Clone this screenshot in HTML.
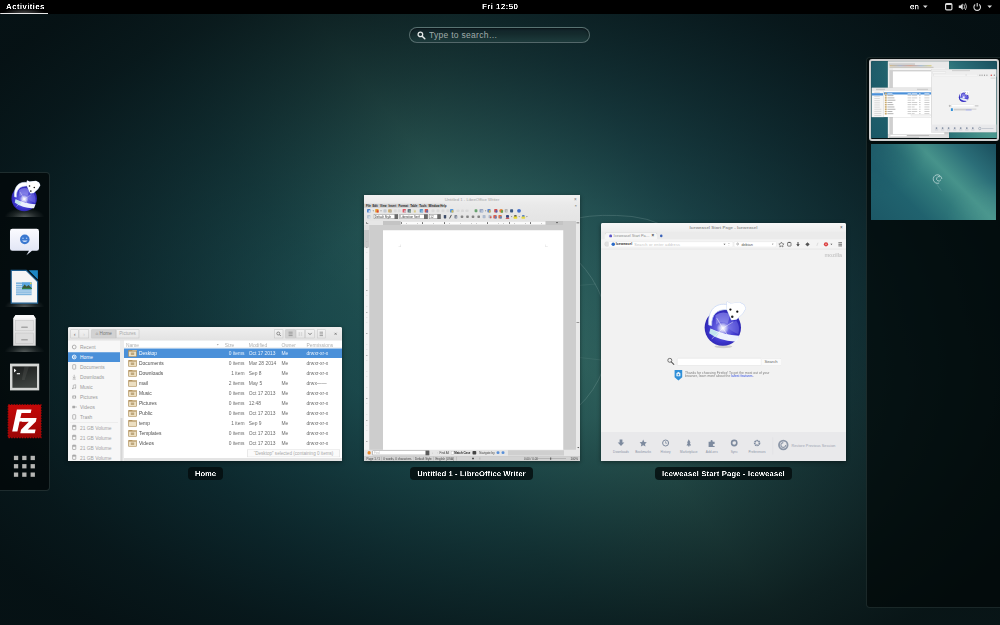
<!DOCTYPE html>
<html>
<head>
<meta charset="utf-8">
<title>Activities</title>
<style>
*{box-sizing:border-box;margin:0;padding:0}
html,body{width:1000px;height:625px;overflow:hidden;background:#0a1719;font-family:"Liberation Sans",sans-serif;}
#root{position:absolute;left:0;top:0;width:1000px;height:625px;overflow:hidden;background:#1c4545;}
.abs{position:absolute}
#wall{position:absolute;left:0;top:0;width:1000px;height:625px;
  background:
   radial-gradient(ellipse 45% 70% at 0% 0%, rgba(26,84,100,.75), rgba(26,84,100,0) 100%),
   radial-gradient(ellipse 40% 50% at 100% 100%, rgba(80,156,146,.55), rgba(80,156,146,0) 100%),
   linear-gradient(52deg, #1c5866 0%, #1f6470 22%, #2f7a7c 40%, #4a9890 53%, #2f747c 68%, #215f6c 82%, #174654 100%);}
#vig{position:absolute;left:0;top:0;width:1000px;height:625px;
  background:radial-gradient(ellipse 640px 400px at 500px 312px, rgba(4,12,14,.36) 0%, rgba(4,12,14,.44) 30%, rgba(4,12,14,.69) 62%, rgba(4,12,14,.86) 85%, rgba(4,12,14,.93) 100%);}
/* top bar */
#topbar{position:absolute;left:0;top:0;width:1000px;height:14px;background:#000;color:#fff;font-size:8px;font-weight:bold;}
#topbar .t{position:absolute;top:2px;line-height:36px;font-size:32px;white-space:nowrap;transform:scale(.25);transform-origin:0 0;will-change:transform}
/* search */
#search{position:absolute;left:409px;top:26.6px;width:181px;height:16px;border-radius:8px;border:1px solid rgba(150,172,170,.5);
  background:linear-gradient(#11232a 0%,#142a2c 40%,#1d3b3c 100%);box-shadow:inset 0 1px 2px rgba(0,0,0,.5);}
#search span{position:absolute;left:19px;top:2.6px;font-size:34px;line-height:36px;color:#a0acab;white-space:nowrap;letter-spacing:1.12px;transform:scale(.25);transform-origin:0 0}
/* dash */
#dash{position:absolute;left:-2px;top:172px;width:51.6px;height:319px;background:rgba(2,8,9,.78);border:1px solid rgba(70,92,92,.42);border-radius:0 4px 4px 0;}
.glow{position:absolute;left:5px;width:38.600px;height:9px;background:radial-gradient(ellipse 20px 9px at 50% 100%, rgba(205,210,205,.40), rgba(205,210,205,.12) 60%, rgba(205,210,205,0) 100%);}
/* captions */
.cap{position:absolute;height:13px;border-radius:4px;background:rgba(4,12,14,.82);color:#fff;}
.cap span{position:absolute;left:0;top:0;width:400%;height:52px;transform:scale(.25);transform-origin:0 0;will-change:transform;font-weight:bold;font-size:30.4px;line-height:52px;text-align:center;white-space:nowrap;letter-spacing:.5px}
.t4{position:absolute;transform:scale(.25);transform-origin:0 0;white-space:nowrap}
/* windows */
.win{position:absolute;background:#f3f3f3;overflow:hidden;box-shadow:0 1px 4px rgba(0,0,0,.45);}
.win .x{position:absolute;white-space:nowrap}
.sc{position:absolute;left:0;top:0;width:400%;height:400%;transform:scale(.25);transform-origin:0 0}
</style>
</head>
<body>
<div id="root">
  <div id="wall"></div>
  <div id="vig"></div>
  <svg id="swirl" class="abs" style="left:560px;top:190px" width="120" height="300" viewBox="560 190 120 300" fill="none" stroke="#d4ebe6" stroke-width=".7" opacity=".22">
    <path d="M578 218Q600 213.500 632 216.500Q648 218.500 660 224"/>
    <path d="M578 261Q594 277 603 301"/>
    <path d="M578 285.500L596 284" opacity=".5"/>
    <path d="M578 357.300L603 360.200" opacity=".5"/>
    <path d="M603 369.500Q595 391 578 407"/>
  </svg>

  <!-- TOP BAR -->
  <div id="topbar">
    <div class="abs" style="left:0;top:6px;width:48px;height:8px;background:radial-gradient(ellipse 22px 6px at 50% 100%, rgba(255,255,255,.32), rgba(255,255,255,0) 100%)"></div>
    <div class="abs" style="left:0;top:12.5px;width:48px;height:1.5px;background:#e8e8e8;border-radius:2px 0 0 0"></div>
    <div class="t" style="left:6px;letter-spacing:1.28px">Activities</div>
    <div class="t" style="left:482.4px;letter-spacing:1.52px">Fri 12:50</div>
    <div class="t" style="left:910px;font-weight:normal;color:#e8e8e8;-webkit-text-stroke:1.1px #e8e8e8">en</div>
    <svg class="abs" style="left:920px;top:0" width="80" height="14" viewBox="0 0 80 14">
      <path d="M3 5.5h4.6L5.3 8z" fill="#ddd"/>
      <rect x="25.6" y="3.6" width="6.3" height="6.3" rx="1.2" fill="none" stroke="#ddd" stroke-width="1.2"/><rect x="25.6" y="3.4" width="6.3" height="1.6" rx=".6" fill="#ddd"/>
      <path d="M38.8 5.4h1.7l2.2-2v6.6l-2.2-2h-1.7z" fill="#ddd"/>
      <path d="M43.9 4.4q1.4 2.3 0 4.6M45.4 3.4q2.2 3.3 0 6.6" fill="none" stroke="#ccc" stroke-width=".9"/>
      <path d="M55.2 4.5a3.3 3.3 0 1 0 4 0" fill="none" stroke="#ddd" stroke-width="1.1"/>
      <path d="M57.2 3v3.6" stroke="#ddd" stroke-width="1.1"/>
      <path d="M67.4 5.5h4.6L69.7 8z" fill="#ddd"/>
    </svg>
  </div>

  <!-- SEARCH -->
  <div id="search">
    <svg class="abs" style="left:7px;top:3px" width="9" height="9" viewBox="0 0 9 9"><circle cx="3.4" cy="3.4" r="2.3" fill="none" stroke="#e6eaea" stroke-width="1.3"/><path d="M5.2 5.2L7.8 7.8" stroke="#e6eaea" stroke-width="1.5" stroke-linecap="round"/></svg>
    <span>Type to search…</span>
  </div>

  <!-- DASH -->
  <div id="dash"></div>
  <div class="glow" style="top:207.500px"></div>
  <div class="glow" style="top:297.800px"></div>
  <div class="glow" style="top:342.700px"></div>
  <svg class="abs" style="left:0;top:172px" width="50" height="320" viewBox="0 172 50 320">
    <defs>
      <radialGradient id="gl" cx=".5" cy=".52" r=".55">
        <stop offset="0" stop-color="#b9b8f6"/><stop offset=".28" stop-color="#6c69e2"/><stop offset=".7" stop-color="#3b34cc"/><stop offset="1" stop-color="#2a22a8"/>
      </radialGradient>
      <radialGradient id="st" cx=".5" cy=".5" r=".5"><stop offset="0" stop-color="#fff" stop-opacity=".95"/><stop offset="1" stop-color="#fff" stop-opacity="0"/></radialGradient>
      <linearGradient id="emp" x1="0" y1="0" x2="0" y2="1"><stop offset="0" stop-color="#fbfbff"/><stop offset="1" stop-color="#dde2f4"/></linearGradient>
      <linearGradient id="term" x1="0" y1="0" x2=".3" y2="1"><stop offset="0" stop-color="#1b1d1c"/><stop offset="1" stop-color="#3c413e"/></linearGradient>
      <linearGradient id="cab" x1="0" y1="0" x2="0" y2="1"><stop offset="0" stop-color="#f4f4f4"/><stop offset="1" stop-color="#d9d9d9"/></linearGradient>
      <linearGradient id="fz" x1="0" y1="0" x2="0" y2="1"><stop offset="0" stop-color="#c40808"/><stop offset="1" stop-color="#9c0606"/></linearGradient>
    </defs>
    <!-- iceweasel -->
    <g id="icew">
      <circle cx="24.2" cy="198.600" r="12.7" fill="url(#gl)"/>
      <path d="M19 190Q24 186.500 29.500 189.500L27.500 196Q23 193 19.500 196.500Z" fill="#a6a4f2" opacity=".5"/>
      <path d="M27 198L33.500 193.500Q36.500 198 35 203Q31 202 27 198Z" fill="#8c8aec" opacity=".4"/>
      <path d="M15.600 199.300Q25 203.800 35.600 204.300L34 208.200Q23.500 208.800 14.800 202.600Z" fill="#f2f8ff" opacity=".96"/>
      <path d="M15.400 199.200Q19 201 21.500 202.300L19.500 205.500Q16.500 204 14.700 202.600Z" fill="#8fd8dc" opacity=".45"/>
      <circle cx="24.200" cy="199" r="4.400" fill="url(#st)"/>
      <path d="M20 192L24.200 199L31.500 194.500M24.200 199L29 206M16.500 206.500L24.200 199" stroke="#fff" stroke-width=".5" opacity=".7" fill="none"/>
      <path d="M27.400 182.600C19.500 181 13.600 186 14.400 196.700L16.400 197.200C16.200 189.400 20 185.600 28 186Z" fill="#fff" stroke="#c6d6f6" stroke-width=".55"/>
      <path d="M27.400 181.200L29.600 182.300L36 181.600L38.600 183L39.600 185.200L37.600 188.600L33.400 192.400L30.600 192.800L29.200 189.600L27.600 186Z" fill="#fff" stroke="#c6d6f6" stroke-width="1.500" stroke-linejoin="round"/><path d="M27.400 181.200L29.600 182.300L36 181.600L38.600 183L39.600 185.200L37.600 188.600L33.400 192.400L30.600 192.800L29.200 189.600L27.600 186Z" fill="#fff" stroke="#fff" stroke-width=".9" stroke-linejoin="round"/>
      <circle cx="29.500" cy="186" r=".8" fill="#111"/><circle cx="34.300" cy="187.500" r=".8" fill="#111"/><circle cx="30.800" cy="191" r=".85" fill="#222"/>
    </g>
    <!-- empathy -->
    <path d="M12.4 228.8h24.2a2.4 2.4 0 0 1 2.4 2.4v17.2a2.4 2.4 0 0 1-2.4 2.4h-4.6l-5.6 4.4l2.6-4.4h-16.6a2.4 2.4 0 0 1-2.4-2.4v-17.2a2.4 2.4 0 0 1 2.4-2.4z" fill="url(#emp)"/>
    <circle cx="24.8" cy="239.4" r="4.8" fill="#3a78d0"/>
    <circle cx="23" cy="238.2" r=".8" fill="#a8c8f4"/><circle cx="26.6" cy="238.2" r=".8" fill="#a8c8f4"/>
    <path d="M22 240.4Q24.8 243.4 27.6 240.4Z" fill="#cfe0fa"/>
    <!-- libreoffice -->
    <path d="M11.2 270.4H26.2L37.6 281.6V303.2H11.2Z" fill="#f5f5f5" stroke="#1c5d8e" stroke-width="1.2"/>
    <path d="M28.6 270.2H37.9V279.4Z" fill="#1b86c4"/>
    <rect x="16" y="282.4" width="15.6" height="12.8" fill="#7db4dd"/>
    <path d="M16 284.5h6M16 286.7h6M16 288.9h6M16 291h15.6M16 293.2h15.6" stroke="#e9f2fa" stroke-width=".7"/>
    <rect x="22" y="282.4" width="9.8" height="6.6" fill="#5aa6e0"/>
    <path d="M22 288L24.6 284.6L26.6 286.6L28.6 285L31.8 288.2V289H22Z" fill="#3c5a3a"/>
    <rect x="22" y="288.2" width="9.8" height=".9" fill="#2d8a50"/>
    <circle cx="30.8" cy="283.4" r=".8" fill="#f4d83a"/>
    <!-- file cabinet -->
    <path d="M15.6 315H33.4L35.7 318.6V345.8H13.2V318.6Z" fill="url(#cab)"/>
    <path d="M15.6 315H33.4L35.7 318.6H13.2Z" fill="#fafafa"/>
    <rect x="15.6" y="320.6" width="17.8" height="10.2" fill="#e2e2e2" stroke="#c4c4c4" stroke-width=".6"/>
    <rect x="15.6" y="333" width="17.8" height="10.4" fill="#dcdcdc" stroke="#c2c2c2" stroke-width=".6"/>
    <rect x="21.2" y="326.6" width="6.6" height="1.5" rx=".5" fill="#a6a6a6"/>
    <rect x="21.2" y="339" width="6.6" height="1.5" rx=".5" fill="#a6a6a6"/>
    <!-- terminal -->
    <rect x="10" y="363.6" width="29.2" height="26.8" fill="#d4d6d4"/>
    <rect x="12.4" y="366.4" width="24.6" height="21.4" fill="url(#term)"/>
    <path d="M24.4 366.4H29L24.6 380H21.8Z" fill="#fff" opacity=".07"/>
    <path d="M14 368.4L16.4 370.6L14 372.6Z" fill="#f4f4f4"/>
    <rect x="16.8" y="373" width="3.2" height="1.3" fill="#d8d8d8"/>
    <!-- filezilla -->
    <rect x="8.3" y="404.9" width="32.6" height="32.6" fill="url(#fz)" stroke="#b20808" stroke-width="1.3" stroke-dasharray="1.5 1.17" />
    <rect x="8.9" y="405.5" width="31.4" height="31.4" fill="url(#fz)"/>
    <path d="M16.900 409.400H31.500L30.700 413.100H21.500L20.400 418.100H27.500L26.700 421.600H19.600L17.400 431.400H12.200Z" fill="#fff"/>
    <path d="M22.600 418.100H36.600L35.900 421.600L27.800 429.400H35.600L34.800 433.300H20.300L21 429.800L28.800 421.800H21.800Z" fill="#fff"/>
    <!-- apps grid -->
    <g fill="#b6b6b4">
      <rect x="13.9" y="455.8" width="4.3" height="4.3"/><rect x="22.2" y="455.8" width="4.3" height="4.3"/><rect x="30.6" y="455.8" width="4.3" height="4.3"/>
      <rect x="13.9" y="464.1" width="4.3" height="4.3"/><rect x="22.2" y="464.1" width="4.3" height="4.3"/><rect x="30.6" y="464.1" width="4.3" height="4.3"/>
      <rect x="13.9" y="472.5" width="4.3" height="4.3"/><rect x="22.2" y="472.5" width="4.3" height="4.3"/><rect x="30.6" y="472.5" width="4.3" height="4.3"/>
    </g>
  </svg>

<div class="win" id="wfiles" style="left:68px;top:327px;width:274px;height:134px;background:#fff;border-radius:2px 2px 0 0">
<div class="sc">
<div class="abs" style="left:0;top:0;width:1096px;height:54px;background:linear-gradient(#efefef,#e3e3e3);border-bottom:2.8px solid #c2c2c2"></div>
<div class="abs" style="left:10px;top:10.4px;width:33.2px;height:34.4px;background:linear-gradient(#f2f2f2,#e6e6e6);border:2.4px solid #c4c4c4;font-size:18.4px;line-height:30.4px;color:#888;text-align:center;white-space:nowrap"><span style="color:#666;font-size:24px;line-height:28px">‹</span></div>
<div class="abs" style="left:43.2px;top:10.4px;width:40.8px;height:34.4px;background:linear-gradient(#f2f2f2,#e6e6e6);border:2.4px solid #c4c4c4;font-size:18.4px;line-height:30.4px;color:#888;text-align:center;white-space:nowrap"><span style="color:#ccc;font-size:24px;line-height:28px">›</span></div>
<div class="abs" style="left:94px;top:10.4px;width:97.6px;height:34.4px;background:#d2d2d2;border:2.4px solid #c4c4c4;font-size:18.4px;line-height:30.4px;color:#888;text-align:center;white-space:nowrap"><span style="color:#777">⌂ Home</span></div>
<div class="abs" style="left:191.6px;top:10.4px;width:93.6px;height:34.4px;background:linear-gradient(#f2f2f2,#e6e6e6);border:2.4px solid #c4c4c4;font-size:18.4px;line-height:30.4px;color:#888;text-align:center;white-space:nowrap"><span style="color:#aaa">Pictures</span></div>
<div class="abs" style="left:824.8px;top:10.4px;width:36px;height:34.4px;background:linear-gradient(#f2f2f2,#e6e6e6);border:2.4px solid #c4c4c4;font-size:18.4px;line-height:30.4px;color:#888;text-align:center;white-space:nowrap"></div>
<div class="abs" style="left:870px;top:10.4px;width:40.8px;height:34.4px;background:#d2d2d2;border:2.4px solid #c4c4c4;font-size:18.4px;line-height:30.4px;color:#888;text-align:center;white-space:nowrap"></div>
<div class="abs" style="left:910.8px;top:10.4px;width:37.6px;height:34.4px;background:linear-gradient(#f2f2f2,#e6e6e6);border:2.4px solid #c4c4c4;font-size:18.4px;line-height:30.4px;color:#888;text-align:center;white-space:nowrap"></div>
<div class="abs" style="left:948.4px;top:10.4px;width:38.8px;height:34.4px;background:linear-gradient(#f2f2f2,#e6e6e6);border:2.4px solid #c4c4c4;font-size:18.4px;line-height:30.4px;color:#888;text-align:center;white-space:nowrap"></div>
<div class="abs" style="left:996px;top:10.4px;width:34.8px;height:34.4px;background:linear-gradient(#f2f2f2,#e6e6e6);border:2.4px solid #c4c4c4;font-size:18.4px;line-height:30.4px;color:#888;text-align:center;white-space:nowrap"></div>
<svg class="abs" style="left:800px;top:0" width="296" height="54" viewBox="200 0 74 13.5"><circle cx="210.3" cy="6.5" r="1.5" fill="none" stroke="#666" stroke-width=".7"/><path d="M211.4 7.6L212.8 9" stroke="#666" stroke-width=".8"/><path d="M220.6 5.2h4M220.6 6.9h4M220.6 8.6h4" stroke="#8a8a8a" stroke-width=".8"/><path d="M230.6 5.4h1.4v1.2h-1.4zM232.8 5.4h1.4v1.2h-1.4zM230.6 7.4h1.4v1.2h-1.4zM232.8 7.4h1.4v1.2h-1.4z" fill="#c4c4c4"/><path d="M240.3 5.9L242 7.7L243.7 5.9" fill="none" stroke="#666" stroke-width=".8"/><path d="M251.6 5.2h3.4M251.6 6.9h3.4M251.6 8.6h3.4" stroke="#8a8a8a" stroke-width=".8"/><path d="M266.6 5.8L268.6 7.8M268.6 5.8L266.6 7.8" stroke="#666" stroke-width=".7"/></svg>
<div class="abs" style="left:0;top:54px;width:208px;height:482px;background:#f7f7f7"></div>
<div class="abs" style="left:208px;top:54px;width:16px;height:482px;background:#ececec"></div>
<div class="abs" style="left:209.6px;top:364px;width:8.8px;height:172px;background:#d6d6d6"></div>
<div class="abs" style="left:0;top:101.2px;width:208px;height:39.2px;background:#4a90d9"></div>
<div class="abs" style="left:8px;top:381.6px;width:192px;height:2px;background:#e2e2e2"></div>
<div class="x" style="left:48px;top:70px;font-size:19.6px;line-height:24px;color:#9a9a9a">Recent</div>
<div class="x" style="left:48px;top:110px;font-size:19.6px;line-height:24px;color:#fff">Home</div>
<div class="x" style="left:48px;top:150px;font-size:19.6px;line-height:24px;color:#9a9a9a">Documents</div>
<div class="x" style="left:48px;top:190px;font-size:19.6px;line-height:24px;color:#9a9a9a">Downloads</div>
<div class="x" style="left:48px;top:230px;font-size:19.6px;line-height:24px;color:#9a9a9a">Music</div>
<div class="x" style="left:48px;top:270px;font-size:19.6px;line-height:24px;color:#9a9a9a">Pictures</div>
<div class="x" style="left:48px;top:310px;font-size:19.6px;line-height:24px;color:#9a9a9a">Videos</div>
<div class="x" style="left:48px;top:350px;font-size:19.6px;line-height:24px;color:#9a9a9a">Trash</div>
<div class="x" style="left:48px;top:392px;font-size:19.6px;line-height:24px;color:#a4a4a4">21 GB Volume</div>
<div class="x" style="left:48px;top:431.6px;font-size:19.6px;line-height:24px;color:#a4a4a4">21 GB Volume</div>
<div class="x" style="left:48px;top:471.2px;font-size:19.6px;line-height:24px;color:#a4a4a4">21 GB Volume</div>
<div class="x" style="left:48px;top:510.8px;font-size:19.6px;line-height:24px;color:#a4a4a4">21 GB Volume</div>
<div class="abs" style="left:224px;top:54px;width:872px;height:30.4px;background:#fff;border-bottom:2px solid #e4e4e4"></div>
<div class="x" style="left:232px;top:59.6px;font-size:19.6px;line-height:24px;color:#b0b0b0">Name</div>
<div class="x" style="left:627.2px;top:59.6px;font-size:19.6px;line-height:24px;color:#b0b0b0">Size</div>
<div class="x" style="left:723.2px;top:59.6px;font-size:19.6px;line-height:24px;color:#b0b0b0">Modified</div>
<div class="x" style="left:854px;top:59.6px;font-size:19.6px;line-height:24px;color:#b0b0b0">Owner</div>
<div class="x" style="left:954px;top:59.6px;font-size:19.6px;line-height:24px;color:#b0b0b0">Permissions</div>
<div class="abs" style="left:595.2px;top:68px;width:0;height:0;border:4.8px solid transparent;border-top:6.4px solid #aaa"></div>
<div class="abs" style="left:224px;top:85.6px;width:872px;height:38px;background:#4a90d9"></div>
<div class="x" style="left:284px;font-size:19.6px;line-height:24px;top:93.2px;color:#fff">Desktop</div>
<div class="x" style="left:600px;width:106px;text-align:right;font-size:19.6px;line-height:24px;top:93.2px;color:#eaf2fc">0 items</div>
<div class="x" style="left:723.2px;font-size:19.6px;line-height:24px;top:93.2px;color:#eaf2fc">Oct 17 2013</div>
<div class="x" style="left:854px;font-size:19.6px;line-height:24px;top:93.2px;color:#eaf2fc">Me</div>
<div class="x" style="left:954px;font-size:19.6px;line-height:24px;top:93.2px;color:#eaf2fc">drwxr-xr-x</div>
<div class="x" style="left:284px;font-size:19.6px;line-height:24px;top:133.2px;color:#4c4c4c">Documents</div>
<div class="x" style="left:600px;width:106px;text-align:right;font-size:19.6px;line-height:24px;top:133.2px;color:#6a6a6a">0 items</div>
<div class="x" style="left:723.2px;font-size:19.6px;line-height:24px;top:133.2px;color:#6a6a6a">Mar 28 2014</div>
<div class="x" style="left:854px;font-size:19.6px;line-height:24px;top:133.2px;color:#6a6a6a">Me</div>
<div class="x" style="left:954px;font-size:19.6px;line-height:24px;top:133.2px;color:#6a6a6a">drwxr-xr-x</div>
<div class="x" style="left:284px;font-size:19.6px;line-height:24px;top:173.2px;color:#4c4c4c">Downloads</div>
<div class="x" style="left:600px;width:106px;text-align:right;font-size:19.6px;line-height:24px;top:173.2px;color:#6a6a6a">1 item</div>
<div class="x" style="left:723.2px;font-size:19.6px;line-height:24px;top:173.2px;color:#6a6a6a">Sep 8</div>
<div class="x" style="left:854px;font-size:19.6px;line-height:24px;top:173.2px;color:#6a6a6a">Me</div>
<div class="x" style="left:954px;font-size:19.6px;line-height:24px;top:173.2px;color:#6a6a6a">drwxr-xr-x</div>
<div class="x" style="left:284px;font-size:19.6px;line-height:24px;top:213.2px;color:#4c4c4c">mail</div>
<div class="x" style="left:600px;width:106px;text-align:right;font-size:19.6px;line-height:24px;top:213.2px;color:#6a6a6a">2 items</div>
<div class="x" style="left:723.2px;font-size:19.6px;line-height:24px;top:213.2px;color:#6a6a6a">May 5</div>
<div class="x" style="left:854px;font-size:19.6px;line-height:24px;top:213.2px;color:#6a6a6a">Me</div>
<div class="x" style="left:954px;font-size:19.6px;line-height:24px;top:213.2px;color:#6a6a6a">drwx——</div>
<div class="x" style="left:284px;font-size:19.6px;line-height:24px;top:253.2px;color:#4c4c4c">Music</div>
<div class="x" style="left:600px;width:106px;text-align:right;font-size:19.6px;line-height:24px;top:253.2px;color:#6a6a6a">0 items</div>
<div class="x" style="left:723.2px;font-size:19.6px;line-height:24px;top:253.2px;color:#6a6a6a">Oct 17 2013</div>
<div class="x" style="left:854px;font-size:19.6px;line-height:24px;top:253.2px;color:#6a6a6a">Me</div>
<div class="x" style="left:954px;font-size:19.6px;line-height:24px;top:253.2px;color:#6a6a6a">drwxr-xr-x</div>
<div class="x" style="left:284px;font-size:19.6px;line-height:24px;top:293.2px;color:#4c4c4c">Pictures</div>
<div class="x" style="left:600px;width:106px;text-align:right;font-size:19.6px;line-height:24px;top:293.2px;color:#6a6a6a">0 items</div>
<div class="x" style="left:723.2px;font-size:19.6px;line-height:24px;top:293.2px;color:#6a6a6a">12:48</div>
<div class="x" style="left:854px;font-size:19.6px;line-height:24px;top:293.2px;color:#6a6a6a">Me</div>
<div class="x" style="left:954px;font-size:19.6px;line-height:24px;top:293.2px;color:#6a6a6a">drwxr-xr-x</div>
<div class="x" style="left:284px;font-size:19.6px;line-height:24px;top:333.2px;color:#4c4c4c">Public</div>
<div class="x" style="left:600px;width:106px;text-align:right;font-size:19.6px;line-height:24px;top:333.2px;color:#6a6a6a">0 items</div>
<div class="x" style="left:723.2px;font-size:19.6px;line-height:24px;top:333.2px;color:#6a6a6a">Oct 17 2013</div>
<div class="x" style="left:854px;font-size:19.6px;line-height:24px;top:333.2px;color:#6a6a6a">Me</div>
<div class="x" style="left:954px;font-size:19.6px;line-height:24px;top:333.2px;color:#6a6a6a">drwxr-xr-x</div>
<div class="x" style="left:284px;font-size:19.6px;line-height:24px;top:373.2px;color:#4c4c4c">temp</div>
<div class="x" style="left:600px;width:106px;text-align:right;font-size:19.6px;line-height:24px;top:373.2px;color:#6a6a6a">1 item</div>
<div class="x" style="left:723.2px;font-size:19.6px;line-height:24px;top:373.2px;color:#6a6a6a">Sep 9</div>
<div class="x" style="left:854px;font-size:19.6px;line-height:24px;top:373.2px;color:#6a6a6a">Me</div>
<div class="x" style="left:954px;font-size:19.6px;line-height:24px;top:373.2px;color:#6a6a6a">drwxr-xr-x</div>
<div class="x" style="left:284px;font-size:19.6px;line-height:24px;top:413.2px;color:#4c4c4c">Templates</div>
<div class="x" style="left:600px;width:106px;text-align:right;font-size:19.6px;line-height:24px;top:413.2px;color:#6a6a6a">0 items</div>
<div class="x" style="left:723.2px;font-size:19.6px;line-height:24px;top:413.2px;color:#6a6a6a">Oct 17 2013</div>
<div class="x" style="left:854px;font-size:19.6px;line-height:24px;top:413.2px;color:#6a6a6a">Me</div>
<div class="x" style="left:954px;font-size:19.6px;line-height:24px;top:413.2px;color:#6a6a6a">drwxr-xr-x</div>
<div class="x" style="left:284px;font-size:19.6px;line-height:24px;top:453.2px;color:#4c4c4c">Videos</div>
<div class="x" style="left:600px;width:106px;text-align:right;font-size:19.6px;line-height:24px;top:453.2px;color:#6a6a6a">0 items</div>
<div class="x" style="left:723.2px;font-size:19.6px;line-height:24px;top:453.2px;color:#6a6a6a">Oct 17 2013</div>
<div class="x" style="left:854px;font-size:19.6px;line-height:24px;top:453.2px;color:#6a6a6a">Me</div>
<div class="x" style="left:954px;font-size:19.6px;line-height:24px;top:453.2px;color:#6a6a6a">drwxr-xr-x</div>
<svg class="abs" style="left:0;top:0" width="1096" height="536" viewBox="0 0 274 134"><circle cx="6.2" cy="20.00" r="1.9" fill="none" stroke="#a8a8a8" stroke-width=".9"/><circle cx="6.2" cy="30.00" r="1.9" fill="none" stroke="#fff" stroke-width=".9"/><circle cx="6.2" cy="30.00" r=".8" fill="#fff"/><rect x="4.7" y="37.70" width="3" height="4.4" rx=".5" fill="none" stroke="#a8a8a8" stroke-width=".8"/><path d="M6.2 47.80v3.400M4.800 49.80l1.400 1.500 1.400-1.500M4.600 52.10h3.200" fill="none" stroke="#a8a8a8" stroke-width=".7"/><path d="M5.300 61.40v-3.200l2.400-.5v3.200" fill="none" stroke="#a8a8a8" stroke-width=".7"/><circle cx="4.800" cy="61.50" r=".8" fill="#a8a8a8"/><circle cx="7.200" cy="61.00" r=".8" fill="#a8a8a8"/><rect x="4.300" y="68.40" width="3.800" height="3.200" rx=".5" fill="#a8a8a8"/><circle cx="6.200" cy="70.10" r=".9" fill="#f7f7f7"/><rect x="4.300" y="78.70" width="2.800" height="2.600" rx=".4" fill="#a8a8a8"/><path d="M7.100 80.00l1.300-1v2z" fill="#a8a8a8"/><rect x="4.7" y="87.70" width="3" height="4.4" rx=".5" fill="none" stroke="#a8a8a8" stroke-width=".8"/><rect x="4.6" y="98.30" width="3.2" height="4.4" rx=".4" fill="none" stroke="#a8a8a8" stroke-width=".8"/><rect x="4.6" y="98.30" width="3.2" height="1.6" fill="#a8a8a8"/><rect x="4.6" y="108.20" width="3.2" height="4.4" rx=".4" fill="none" stroke="#a8a8a8" stroke-width=".8"/><rect x="4.6" y="108.20" width="3.2" height="1.6" fill="#a8a8a8"/><rect x="4.6" y="118.10" width="3.2" height="4.4" rx=".4" fill="none" stroke="#a8a8a8" stroke-width=".8"/><rect x="4.6" y="118.10" width="3.2" height="1.6" fill="#a8a8a8"/><rect x="4.6" y="128.00" width="3.2" height="4.4" rx=".4" fill="none" stroke="#a8a8a8" stroke-width=".8"/><rect x="4.6" y="128.00" width="3.2" height="1.6" fill="#a8a8a8"/><rect x="60.200" y="23.00" width="8.600" height="6.800" rx=".7" fill="#b2935f"/><rect x="64.400" y="23.00" width="4.400" height="1" fill="#cdb78e"/><rect x="60.900" y="24.60" width="7.200" height="4.600" fill="#ecdfc2"/><rect x="62.800" y="25.50" width="3.400" height="2.500" rx=".5" fill="#b49a6c" opacity=".8"/><rect x="60.200" y="33.00" width="8.600" height="6.800" rx=".7" fill="#b2935f"/><rect x="64.400" y="33.00" width="4.400" height="1" fill="#cdb78e"/><rect x="60.900" y="34.60" width="7.200" height="4.600" fill="#ecdfc2"/><rect x="62.800" y="35.50" width="3.400" height="2.500" rx=".5" fill="#b49a6c" opacity=".8"/><rect x="60.200" y="43.00" width="8.600" height="6.800" rx=".7" fill="#b2935f"/><rect x="64.400" y="43.00" width="4.400" height="1" fill="#cdb78e"/><rect x="60.900" y="44.60" width="7.200" height="4.600" fill="#ecdfc2"/><rect x="62.800" y="45.50" width="3.400" height="2.500" rx=".5" fill="#b49a6c" opacity=".8"/><rect x="60.200" y="53.00" width="8.600" height="6.800" rx=".7" fill="#b2935f"/><rect x="64.400" y="53.00" width="4.400" height="1" fill="#cdb78e"/><rect x="60.900" y="54.60" width="7.200" height="4.600" fill="#ecdfc2"/><rect x="60.200" y="63.00" width="8.600" height="6.800" rx=".7" fill="#b2935f"/><rect x="64.400" y="63.00" width="4.400" height="1" fill="#cdb78e"/><rect x="60.900" y="64.60" width="7.200" height="4.600" fill="#ecdfc2"/><rect x="62.800" y="65.50" width="3.400" height="2.500" rx=".5" fill="#b49a6c" opacity=".8"/><rect x="60.200" y="73.00" width="8.600" height="6.800" rx=".7" fill="#b2935f"/><rect x="64.400" y="73.00" width="4.400" height="1" fill="#cdb78e"/><rect x="60.900" y="74.60" width="7.200" height="4.600" fill="#ecdfc2"/><rect x="62.800" y="75.50" width="3.400" height="2.500" rx=".5" fill="#b49a6c" opacity=".8"/><rect x="60.200" y="83.00" width="8.600" height="6.800" rx=".7" fill="#b2935f"/><rect x="64.400" y="83.00" width="4.400" height="1" fill="#cdb78e"/><rect x="60.900" y="84.60" width="7.200" height="4.600" fill="#ecdfc2"/><rect x="62.800" y="85.50" width="3.400" height="2.500" rx=".5" fill="#b49a6c" opacity=".8"/><rect x="60.200" y="93.00" width="8.600" height="6.800" rx=".7" fill="#b2935f"/><rect x="64.400" y="93.00" width="4.400" height="1" fill="#cdb78e"/><rect x="60.900" y="94.60" width="7.200" height="4.600" fill="#ecdfc2"/><rect x="60.200" y="103.00" width="8.600" height="6.800" rx=".7" fill="#b2935f"/><rect x="64.400" y="103.00" width="4.400" height="1" fill="#cdb78e"/><rect x="60.900" y="104.60" width="7.200" height="4.600" fill="#ecdfc2"/><rect x="62.800" y="105.50" width="3.400" height="2.500" rx=".5" fill="#b49a6c" opacity=".8"/><rect x="60.200" y="113.00" width="8.600" height="6.800" rx=".7" fill="#b2935f"/><rect x="64.400" y="113.00" width="4.400" height="1" fill="#cdb78e"/><rect x="60.900" y="114.60" width="7.200" height="4.600" fill="#ecdfc2"/><rect x="62.800" y="115.50" width="3.400" height="2.500" rx=".5" fill="#b49a6c" opacity=".8"/></svg>
<div class="abs" style="left:716px;top:489.6px;width:372px;height:31.2px;background:#fbfbfb;border:2px solid #d8d8d8;font-size:18.4px;line-height:26.4px;color:#a8a8a8;text-align:center;white-space:nowrap">“Desktop” selected (containing 0 items)</div>
<div class="abs" style="left:224px;top:524px;width:872px;height:12px;background:#e4e4e4"></div>
</div>
</div>
<div class="cap" style="left:188px;top:467px;width:35px"><span style="letter-spacing:0">Home</span></div>
<div class="win" id="wwriter" style="left:364px;top:195px;width:216px;height:266px;background:#cdcdcd">
<div class="sc">
<div class="abs" style="left:0;top:0;width:864px;height:104px;background:linear-gradient(#f1f1f1,#e9e9e9 40%,#e4e4e4)"></div>
<div class="x" style="left:0;width:864px;text-align:center;top:8px;font-size:17px;line-height:24px;color:#a4a4a4">Untitled 1 - LibreOffice Writer</div>
<div class="x" style="left:840px;top:4.8px;font-size:18.4px;line-height:24px;color:#777">×</div>
<div class="x" style="left:841.6px;top:32px;font-size:16.8px;line-height:24px;color:#555">×</div>
<div class="abs" style="left:0;top:35.2px;width:332px;height:16px;background:linear-gradient(90deg,#cfcfcf 92%,rgba(207,207,207,0))"></div>
<div class="x" style="left:8px;width:14.4px;text-align:center;top:33.2px;font-size:11.4px;line-height:20px;color:#222;font-weight:bold">File</div>
<div class="x" style="left:33.6px;width:16.8px;text-align:center;top:33.2px;font-size:11.4px;line-height:20px;color:#222;font-weight:bold">Edit</div>
<div class="x" style="left:64px;width:23.2px;text-align:center;top:33.2px;font-size:11.4px;line-height:20px;color:#222;font-weight:bold">View</div>
<div class="x" style="left:97.6px;width:31.2px;text-align:center;top:33.2px;font-size:11.4px;line-height:20px;color:#222;font-weight:bold">Insert</div>
<div class="x" style="left:138px;width:36px;text-align:center;top:33.2px;font-size:11.4px;line-height:20px;color:#222;font-weight:bold">Format</div>
<div class="x" style="left:184.8px;width:25.2px;text-align:center;top:33.2px;font-size:11.4px;line-height:20px;color:#222;font-weight:bold">Table</div>
<div class="x" style="left:220.8px;width:27.2px;text-align:center;top:33.2px;font-size:11.4px;line-height:20px;color:#222;font-weight:bold">Tools</div>
<div class="x" style="left:258.4px;width:38.4px;text-align:center;top:33.2px;font-size:11.4px;line-height:20px;color:#222;font-weight:bold">Window</div>
<div class="x" style="left:305.2px;width:22.8px;text-align:center;top:33.2px;font-size:11.4px;line-height:20px;color:#222;font-weight:bold">Help</div>
<svg class="abs" style="left:0;top:0" width="864" height="120" viewBox="0 0 216 30"><rect x="3.05" y="14.00" width="3.40" height="3.60" rx=".7" fill="#3a78c8" opacity="0.9"/><rect x="4.58" y="15.26" width="1.87" height="2.34" rx=".5" fill="#dfe8f4" opacity="0.9"/><path d="M8.60 15.40h1.400l-.7 1z" fill="#444" opacity=".8"/><rect x="11.20" y="14.00" width="3.40" height="3.60" rx=".7" fill="#e89820" opacity="0.9"/><rect x="12.73" y="15.26" width="1.87" height="2.34" rx=".5" fill="#d83838" opacity="0.9"/><path d="M16.30 15.40h1.400l-.7 1z" fill="#444" opacity=".8"/><rect x="19.40" y="14.20" width="3.20" height="3.20" rx=".7" fill="#b4bcc8" opacity="0.7"/><rect x="24.10" y="14.20" width="3.60" height="3.20" rx=".7" fill="#c8a050" opacity="0.8"/><rect x="25.72" y="15.32" width="1.98" height="2.08" rx=".5" fill="#b0b0b0" opacity="0.8"/><rect x="29.80" y="14.30" width="3.00" height="3.00" rx=".7" fill="#d0d0d0" opacity="0.6"/><rect x="33.80" y="14.30" width="3.00" height="3.00" rx=".7" fill="#d4d4d4" opacity="0.6"/><rect x="38.60" y="14.00" width="3.40" height="3.60" rx=".7" fill="#e04858" opacity="0.9"/><rect x="40.13" y="15.26" width="1.87" height="2.34" rx=".5" fill="#c8c8d0" opacity="0.9"/><rect x="43.60" y="14.00" width="3.40" height="3.60" rx=".7" fill="#56687a" opacity="0.9"/><rect x="45.13" y="15.26" width="1.87" height="2.34" rx=".5" fill="#8aa890" opacity="0.9"/><rect x="48.60" y="14.10" width="3.20" height="3.40" rx=".7" fill="#e0e0d8" opacity="0.8"/><rect x="50.04" y="15.29" width="1.76" height="2.21" rx=".5" fill="#d8c870" opacity="0.8"/><rect x="55.70" y="14.00" width="3.40" height="3.60" rx=".7" fill="#4a90c8" opacity="0.9"/><rect x="57.23" y="15.26" width="1.87" height="2.34" rx=".5" fill="#9ac0e0" opacity="0.9"/><rect x="60.70" y="14.00" width="3.40" height="3.60" rx=".7" fill="#d04840" opacity="0.9"/><rect x="62.23" y="15.26" width="1.87" height="2.34" rx=".5" fill="#4a70c0" opacity="0.9"/><rect x="67.50" y="14.30" width="3.00" height="3.00" rx=".7" fill="#d2d2d2" opacity="0.6"/><rect x="72.50" y="14.30" width="3.00" height="3.00" rx=".7" fill="#d2d2d2" opacity="0.6"/><rect x="77.50" y="14.30" width="3.00" height="3.00" rx=".7" fill="#d2d2d2" opacity="0.6"/><rect x="82.50" y="14.30" width="3.00" height="3.00" rx=".7" fill="#d2d2d2" opacity="0.6"/><rect x="86.00" y="14.00" width="3.40" height="3.60" rx=".7" fill="#4a90d8" opacity="0.9"/><rect x="87.53" y="15.26" width="1.87" height="2.34" rx=".5" fill="#e8c040" opacity="0.9"/><rect x="92.50" y="14.50" width="3.00" height="2.60" rx=".7" fill="#d0d0d0" opacity="0.6"/><rect x="97.00" y="14.50" width="3.00" height="2.60" rx=".7" fill="#d0d0d0" opacity="0.6"/><rect x="101.50" y="14.50" width="3.00" height="2.60" rx=".7" fill="#d0d0d0" opacity="0.6"/><rect x="110.60" y="14.30" width="2.80" height="3.00" rx=".7" fill="#5a9a60" opacity="0.9"/><rect x="115.50" y="14.10" width="3.80" height="3.40" rx=".7" fill="#8a9ab8" opacity="0.85"/><rect x="117.21" y="15.29" width="2.09" height="2.21" rx=".5" fill="#c0cce0" opacity="0.85"/><path d="M120.90 15.40h1.400l-.7 1z" fill="#444" opacity=".8"/><rect x="123.40" y="14.10" width="3.20" height="3.40" rx=".7" fill="#4a78c8" opacity="0.9"/><rect x="124.84" y="15.29" width="1.76" height="2.21" rx=".5" fill="#e8b830" opacity="0.9"/><rect x="130.20" y="14.10" width="3.20" height="3.40" rx=".7" fill="#d04040" opacity="0.9"/><rect x="131.64" y="15.29" width="1.76" height="2.21" rx=".5" fill="#4060c0" opacity="0.9"/><circle cx="137.20" cy="15.80" r="1.90" fill="#e07820" opacity="0.9"/><rect x="137.01" y="15.23" width="2.09" height="2.47" rx=".5" fill="#58a050" opacity="0.9"/><rect x="140.70" y="14.10" width="3.00" height="3.40" rx=".7" fill="#a8a8a8" opacity="0.8"/><rect x="142.05" y="15.29" width="1.65" height="2.21" rx=".5" fill="#d0d0d0" opacity="0.8"/><rect x="146.10" y="14.20" width="3.00" height="3.20" rx=".7" fill="#284878" opacity="0.9"/><circle cx="155.00" cy="15.80" r="1.90" fill="#3a68c8" opacity="0.95"/><rect x="3.05" y="20.00" width="3.40" height="3.40" rx=".7" fill="#a8b8c8" opacity="0.8"/><rect x="4.58" y="21.19" width="1.87" height="2.21" rx=".5" fill="#dfe6ee" opacity="0.8"/><rect x="79.80" y="19.90" width="2.40" height="3.60" rx=".7" fill="#283858" opacity="0.9"/><path d="M87.39999999999998 19.899999999999988L85.60000000000002 23.49999999999999" stroke="#444" stroke-width=".9"/><rect x="90.40" y="20.00" width="2.80" height="3.40" rx=".7" fill="#707888" opacity="0.85"/><rect x="91.66" y="21.19" width="1.54" height="2.21" rx=".5" fill="#b0b8c8" opacity="0.85"/><rect x="96.70" y="20.40" width="2.60" height="2.60" rx=".7" fill="#6c6c6c" opacity="0.8"/><rect x="102.20" y="20.40" width="2.60" height="2.60" rx=".7" fill="#6c6c6c" opacity="0.8"/><rect x="107.70" y="20.40" width="2.60" height="2.60" rx=".7" fill="#6c6c6c" opacity="0.8"/><rect x="113.40" y="20.40" width="2.60" height="2.60" rx=".7" fill="#6c6c6c" opacity="0.8"/><rect x="118.60" y="20.10" width="3.00" height="3.20" rx=".7" fill="#a0b0c8" opacity="0.8"/><rect x="124.50" y="20.10" width="3.00" height="3.20" rx=".7" fill="#a4b4cc" opacity="0.8"/><rect x="125.85" y="21.22" width="1.65" height="2.08" rx=".5" fill="#d84838" opacity="0.8"/><rect x="129.30" y="20.00" width="3.40" height="3.40" rx=".7" fill="#d85040" opacity="0.9"/><rect x="130.83" y="21.19" width="1.87" height="2.21" rx=".5" fill="#4a88d0" opacity="0.9"/><rect x="134.40" y="20.00" width="3.40" height="3.40" rx=".7" fill="#d86038" opacity="0.9"/><rect x="135.93" y="21.19" width="1.87" height="2.21" rx=".5" fill="#4a88d0" opacity="0.9"/><rect x="142.00" y="19.90" width="3.00" height="2.80" rx=".7" fill="#283878" opacity="0.9"/><rect x="141.70" y="22.70" width="3.60" height="1.00" rx=".7" fill="#c02020" opacity="0.9"/><path d="M146.90 21.30h1.400l-.7 1z" fill="#444" opacity=".8"/><rect x="150.10" y="20.10" width="2.60" height="2.00" rx=".7" fill="#58584a" opacity="0.9"/><rect x="149.50" y="21.60" width="3.80" height="2.20" rx=".7" fill="#e8d820" opacity="0.9"/><path d="M154.50 21.30h1.400l-.7 1z" fill="#444" opacity=".8"/><rect x="158.00" y="20.00" width="2.60" height="2.20" rx=".7" fill="#4a78c0" opacity="0.9"/><rect x="157.40" y="21.60" width="3.80" height="2.20" rx=".7" fill="#e8d838" opacity="0.9"/><path d="M162.20 21.30h1.400l-.7 1z" fill="#444" opacity=".8"/></svg>
<div class="abs" style="left:38.8px;top:76.8px;width:97.2px;height:19.2px;background:#fff;border:2px solid #8a8a8a"></div>
<div class="abs" style="left:121.6px;top:76.8px;width:14.4px;height:19.2px;background:#6a6a6a"></div>
<div class="x" style="left:42.8px;top:77.2px;font-size:11.6px;line-height:18.4px;color:#333">Default Style</div>
<div class="abs" style="left:141.6px;top:76.8px;width:113.2px;height:19.2px;background:#fff;border:2px solid #8a8a8a"></div>
<div class="abs" style="left:240.4px;top:76.8px;width:14.4px;height:19.2px;background:#6a6a6a"></div>
<div class="x" style="left:145.6px;top:77.2px;font-size:11.6px;line-height:18.4px;color:#333">Liberation Serif</div>
<div class="abs" style="left:261.2px;top:76.8px;width:46px;height:19.2px;background:#fff;border:2px solid #8a8a8a"></div>
<div class="abs" style="left:292.8px;top:76.8px;width:14.4px;height:19.2px;background:#6a6a6a"></div>
<div class="x" style="left:265.2px;top:77.2px;font-size:11.6px;line-height:18.4px;color:#333">12</div>
<div class="abs" style="left:0;top:104px;width:76px;height:16px;background:#e6e6e6"></div>
<div class="abs" style="left:10.4px;top:108px;width:6.4px;height:7.2px;border-left:2.8px solid #444;border-bottom:2.8px solid #444"></div>
<div class="abs" style="left:76px;top:104px;width:720px;height:15.6px;background:#fbfbfb;border-top:1.6px solid #aaa;border-bottom:1.6px solid #aaa"></div>
<div class="abs" style="left:76px;top:104px;width:71.2px;height:15.6px;background:#c4c4c4"></div>
<div class="abs" style="left:726.4px;top:104px;width:69.6px;height:15.6px;background:#c4c4c4"></div>
<div class="abs" style="left:147.2px;top:112px;width:579.2px;height:3.2px;background:repeating-linear-gradient(90deg,#777 0 2.4px,transparent 2.4px 21.6px);opacity:.5"></div>
<div class="abs" style="left:147.2px;top:108px;width:579.2px;height:7.6px;background:repeating-linear-gradient(90deg,#333 0 3.2px,transparent 3.2px 86.4px);opacity:.6"></div>
<div class="abs" style="left:768px;top:108px;width:0;height:0;border:4px solid transparent;border-top:6.4px solid #444"></div>
<div class="abs" style="left:0;top:120px;width:20.8px;height:20px;background:#dedede"></div>
<div class="abs" style="left:0;top:140px;width:20.8px;height:880px;background:#f4f4f4"></div>
<div class="abs" style="left:0;top:140px;width:20.8px;height:69.6px;background:#c8c8c8"></div>
<div class="abs" style="left:8px;top:208px;width:6.4px;height:800px;background:repeating-linear-gradient(180deg,#666 0 2.8px,transparent 2.8px 86.4px);opacity:.45"></div>
<div class="abs" style="left:9.6px;top:164px;width:3.2px;height:840px;background:repeating-linear-gradient(180deg,#999 0 2px,transparent 2px 21.6px);opacity:.35"></div>
<div class="abs" style="left:76px;top:140.8px;width:720.8px;height:880px;background:#fff"></div>
<div class="abs" style="left:138.4px;top:198.4px;width:9.6px;height:9.6px;border-right:2px solid #ddd;border-bottom:2px solid #ddd"></div>
<div class="abs" style="left:725.6px;top:198.4px;width:9.6px;height:9.6px;border-left:2px solid #ddd;border-bottom:2px solid #ddd"></div>
<div class="abs" style="left:848px;top:104px;width:16px;height:916px;background:#e9e9e9"></div>
<div class="abs" style="left:850.4px;top:109.6px;width:10.4px;height:3.2px;background:#555"></div>
<div class="abs" style="left:850.4px;top:508px;width:10.4px;height:2.8px;background:#777"></div>
<div class="abs" style="left:852.8px;top:1008px;width:0;height:0;border:4px solid transparent;border-top:5.6px solid #444"></div>
<div class="abs" style="left:0;top:1018.8px;width:864px;height:26.4px;background:#e6e6e6"></div>
<div class="abs" style="left:576px;top:1020.8px;width:224px;height:20.8px;background:#cfcfcf"></div>
<div class="abs" style="left:13.6px;top:1024px;width:13.6px;height:13.6px;border-radius:50%;background:#e8882a"></div>
<div class="abs" style="left:34.4px;top:1021.6px;width:226.4px;height:19.2px;background:#fff;border:2px solid #8a8a8a"></div>
<div class="abs" style="left:246.4px;top:1021.6px;width:14.4px;height:19.2px;background:#5a5a5a"></div>
<div class="x" style="left:40px;top:1022.4px;font-size:11.6px;line-height:18.4px;color:#bbb">Find</div>
<div class="x" style="left:270.4px;top:1021.6px;font-size:14.4px;line-height:20px;color:#bbb">↓</div>
<div class="x" style="left:290.4px;top:1021.6px;font-size:14.4px;line-height:20px;color:#bbb">↑</div>
<div class="x" style="left:302px;top:1021.2px;font-size:11.6px;line-height:20px;color:#444">Find All</div>
<div class="abs" style="left:348px;top:1024.8px;width:12px;height:12px;background:#fff;border:1.6px solid #999"></div>
<div class="x" style="left:361.2px;top:1021.2px;font-size:11.6px;line-height:20px;color:#222;font-weight:bold">Match Case</div>
<div class="abs" style="left:433.6px;top:1024px;width:15.2px;height:13.6px;background:#444;border-radius:3.2px"></div>
<div class="x" style="left:461.2px;top:1021.2px;font-size:11.6px;line-height:20px;color:#444">Navigate by</div>
<div class="abs" style="left:530.4px;top:1024.8px;width:11.2px;height:11.2px;border-radius:50%;background:#5a90d8"></div>
<div class="abs" style="left:550.4px;top:1024.8px;width:11.2px;height:11.2px;border-radius:50%;background:#5a90d8"></div>
<div class="abs" style="left:0;top:1044.8px;width:864px;height:19.2px;background:#d2d2d2;border-top:1.6px solid #bdbdbd"></div>
<div class="x" style="left:10px;top:1045.6px;font-size:11.8px;line-height:18.4px;color:#3c3c3c">Page 1 / 1</div>
<div class="x" style="left:77.2px;top:1045.6px;font-size:11.8px;line-height:18.4px;color:#3c3c3c">0 words, 0 characters</div>
<div class="x" style="left:204px;top:1045.6px;font-size:11.8px;line-height:18.4px;color:#3c3c3c">Default Style</div>
<div class="x" style="left:285.6px;top:1045.6px;font-size:11.8px;line-height:18.4px;color:#3c3c3c">English (USA)</div>
<div class="x" style="left:640px;top:1045.6px;font-size:11.8px;line-height:18.4px;color:#3c3c3c">0.00 / 0.00</div>
<div class="x" style="left:826px;top:1045.6px;font-size:11.8px;line-height:18.4px;color:#3c3c3c">100%</div>
<div class="abs" style="left:68px;top:1047.2px;width:1.6px;height:14.4px;background:#aaa"></div>
<div class="abs" style="left:197.6px;top:1047.2px;width:1.6px;height:14.4px;background:#aaa"></div>
<div class="abs" style="left:278.4px;top:1047.2px;width:1.6px;height:14.4px;background:#aaa"></div>
<div class="abs" style="left:368px;top:1047.2px;width:1.6px;height:14.4px;background:#aaa"></div>
<div class="abs" style="left:432px;top:1051.2px;width:8px;height:5.6px;background:#555"></div>
<div class="abs" style="left:460px;top:1050.4px;width:6.4px;height:7.2px;background:#bbb"></div>
<div class="abs" style="left:688px;top:1053.6px;width:120px;height:2.4px;background:#999"></div>
<div class="abs" style="left:744px;top:1049.6px;width:4.8px;height:9.6px;background:#666"></div>
</div>
</div>
<div class="cap" style="left:410px;top:467px;width:123px"><span style="letter-spacing:.4px">Untitled 1 - LibreOffice Writer</span></div>
<div class="win" id="wicew" style="left:601px;top:223px;width:245px;height:238px;background:#f2f2f2;border-radius:2px 2px 0 0">
<div class="sc">
<div class="abs" style="left:0;top:0;width:980px;height:34px;background:linear-gradient(#f7f7f7,#eeeeee)"></div>
<div class="x" style="left:0;width:980px;text-align:center;top:5.2px;font-size:17.6px;line-height:24px;color:#989898;font-weight:bold;letter-spacing:0">Iceweasel Start Page - Iceweasel</div>
<div class="x" style="left:956px;top:4.8px;font-size:18.4px;line-height:24px;color:#555">×</div>
<div class="abs" style="left:0;top:34px;width:980px;height:32.4px;background:#ebebeb"></div>
<div class="abs" style="left:14.4px;top:36.8px;width:212px;height:30.4px;background:#f6f6f6;border:2px solid #d4d4d4;border-bottom:none;border-radius:12px 12px 0 0"></div>
<div class="abs" style="left:32.8px;top:46.4px;width:11.2px;height:10.4px;background:#5a52c8;border-radius:4.8px 4.8px 1.6px 1.6px"></div>
<div class="x" style="left:50.4px;top:40px;font-size:15.4px;line-height:24px;color:#8a8a8a">Iceweasel Start Pa…</div>
<div class="x" style="left:201.6px;top:39.2px;font-size:18.4px;line-height:24px;color:#444;font-weight:bold">×</div>
<div class="abs" style="left:236px;top:46.4px;width:10.4px;height:10.4px;border-radius:50%;background:#3a62b8"></div>
<div class="abs" style="left:0;top:66.4px;width:980px;height:38.4px;background:#f4f4f4;border-bottom:2px solid #dcdcdc"></div>
<div class="abs" style="left:13.6px;top:74.4px;width:19.2px;height:19.2px;border-radius:50%;background:#e0e0e0;border:1.6px solid #c8c8c8"></div>
<div class="abs" style="left:30.4px;top:74.4px;width:497.6px;height:21.6px;background:#fff;border:1.6px solid #d8d8d8;border-radius:4px"></div>
<div class="abs" style="left:41.6px;top:77.6px;width:14.4px;height:14.4px;border-radius:50%;background:#2a6ac8"></div>
<div class="x" style="left:59.2px;top:74.4px;font-size:14px;line-height:21.6px;color:#333;font-weight:bold">Iceweasel</div>
<div class="x" style="left:132.8px;top:74px;font-size:15.6px;line-height:21.6px;color:#c4c4c4;letter-spacing:0.72px">Search or enter address</div>
<div class="abs" style="left:490.4px;top:82.8px;width:0;height:0;border:4px solid transparent;border-top:5.2px solid #555"></div>
<div class="abs" style="left:505.6px;top:79.2px;width:10.4px;height:10.4px;border-radius:50%;border:2.4px solid #777;border-right-color:transparent"></div>
<div class="abs" style="left:532px;top:74.4px;width:169.6px;height:21.6px;background:#fff;border:1.6px solid #d8d8d8;border-radius:4px"></div>
<div class="abs" style="left:541.6px;top:79.2px;width:9.6px;height:9.6px;border-radius:50%;border:2px solid #777"></div>
<div class="x" style="left:561.6px;top:74px;font-size:15.2px;line-height:21.6px;color:#555">debian</div>
<div class="abs" style="left:684px;top:82.8px;width:0;height:0;border:3.6px solid transparent;border-top:4.8px solid #555"></div>
<svg class="abs" style="left:704px;top:66.4px" width="276" height="38.4" viewBox="176 0 69 9.6"><path d="M180.4 2.5l.8 1.7 1.8.2-1.3 1.3.3 1.8-1.6-.9-1.6.9.3-1.8-1.3-1.3 1.8-.2z" fill="none" stroke="#555" stroke-width=".6"/><rect x="186.6" y="3" width="3.4" height="3.6" rx=".5" fill="none" stroke="#555" stroke-width=".7"/><rect x="187.4" y="2.4" width="1.8" height="1" fill="#555"/><path d="M197.5 2.4v2.4h1.3l-1.8 2.1-1.8-2.1h1.3v-2.4z" fill="#444"/><circle cx="206.5" cy="4.8" r="1.6" fill="#555"/><path d="M204.4 4.8h4.2M206.5 2.7v4.2" stroke="#555" stroke-width=".5"/><path d="M215.8 6.4l1.2-3.2" stroke="#ccc" stroke-width=".6"/><circle cx="225" cy="4.8" r="2.1" fill="#d83a3a"/><circle cx="225" cy="4.8" r=".9" fill="#f4a0a0"/><path d="M229.4 4.2h2l-1 1.3z" fill="#444"/><path d="M237.4 3.2h3.6M237.4 4.8h3.6M237.4 6.4h3.6" stroke="#555" stroke-width=".8"/></svg>
<div class="x" style="left:893.6px;top:115.2px;font-size:21.6px;line-height:28px;color:#c9c9c9;font-weight:bold;letter-spacing:-0.4px">mozilla</div>
<svg class="abs" style="left:360px;top:280px" width="280" height="248" viewBox="691 293 70 62"><ellipse cx="723.4" cy="346.6" rx="9" ry="1.6" fill="#000" opacity=".14"/><use href="#icew" transform="translate(723.1 327.9) scale(1.433) translate(-24.4 -198.8)"/></svg>
<svg class="abs" style="left:264px;top:538.4px" width="32" height="32" viewBox="0 0 8 8"><circle cx="2.8" cy="2.8" r="2" fill="none" stroke="#555" stroke-width=".8"/><path d="M4.3 4.3L6.8 6.8" stroke="#555" stroke-width="1.1" stroke-linecap="round"/></svg>
<div class="abs" style="left:304px;top:540px;width:337.6px;height:31.2px;background:#fff;border:2px solid #dedede;border-radius:4px 0 0 4px"></div>
<div class="abs" style="left:641.6px;top:540px;width:79.2px;height:31.2px;background:#fafafa;border:2px solid #e2e2e2;border-left:none;border-radius:0 4px 4px 0;font-size:16.8px;line-height:28px;color:#666;text-align:center">Search</div>
<svg class="abs" style="left:292px;top:585.6px" width="36" height="48" viewBox="0 0 9 12"><path d="M.6.6h7.6v7.2L4.4 11 .6 7.800z" fill="#2f8fd8"/><path d="M4.4 2.2l2 1.6v3h-4v-3z" fill="#e8f2fc"/><rect x="3.7" y="4.4" width="1.4" height="1.5" fill="#2f8fd8"/></svg>
<div class="x" style="left:336px;top:592px;font-size:13.4px;line-height:13.6px;color:#7a7a7a;white-space:normal;width:360px;letter-spacing:0.12px">Thanks for choosing Firefox! To get the most out of your browser, learn more about the <span style="color:#2a48e0">latest features</span>.</div>
<div class="abs" style="left:0;top:836px;width:980px;height:116px;background:#e9e9eb"></div>
<svg class="abs" style="left:0;top:836px" width="980" height="116" viewBox="0 0 245 29"><g fill="#7d8a9e"><path d="M18.6 7.4h2.8v3h1.9l-3.3 3.6-3.300-3.600h1.900z"/><path d="M42.200 7.600l1.100 2.300 2.500.3-1.800 1.800.5 2.500-2.300-1.300-2.300 1.300.5-2.500-1.800-1.800 2.500-.3z"/><path d="M87.800 7.200l1.800 3.600h-.9l1.400 2.600h-1.700v1.200h-1.200v-1.200h-1.700l1.400-2.600h-.9z"/><path d="M107.600 9.800h2v-.9a1 1 0 1 1 2 0v.9h2v2.100h-.8a1 1 0 1 0 0 2h.8v1.100h-6z"/></g><circle cx="64.600" cy="11" r="3" fill="none" stroke="#7d8a9e" stroke-width="1"/><path d="M64.600 9.200v2h1.600" stroke="#7d8a9e" stroke-width=".7" fill="none"/><circle cx="133.200" cy="11" r="2.600" fill="none" stroke="#7d8a9e" stroke-width="1.600"/><circle cx="134.100" cy="10.100" r=".7" fill="#e9e9eb"/><circle cx="156.100" cy="11" r="2.400" fill="none" stroke="#7d8a9e" stroke-width="1.700" stroke-dasharray="1.400 .5"/><path d="M171.800 5.400v17" stroke="#dcdce0" stroke-width=".6"/><circle cx="182.300" cy="13" r="4.300" fill="none" stroke="#8c97a8" stroke-width="1.800"/><path d="M182.300 10.600a2.400 2.400 0 1 0 2.400 2.400" fill="none" stroke="#8c97a8" stroke-width="1.100"/></svg>
<div class="x" style="left:20px;width:120px;text-align:center;top:905.6px;font-size:12.4px;line-height:16px;color:#8a94a6;letter-spacing:0.2px">Downloads</div>
<div class="x" style="left:108.8px;width:120px;text-align:center;top:905.6px;font-size:12.4px;line-height:16px;color:#8a94a6;letter-spacing:0.2px">Bookmarks</div>
<div class="x" style="left:198.4px;width:120px;text-align:center;top:905.6px;font-size:12.4px;line-height:16px;color:#8a94a6;letter-spacing:0.2px">History</div>
<div class="x" style="left:291.2px;width:120px;text-align:center;top:905.6px;font-size:12.4px;line-height:16px;color:#8a94a6;letter-spacing:0.2px">Marketplace</div>
<div class="x" style="left:383.2px;width:120px;text-align:center;top:905.6px;font-size:12.4px;line-height:16px;color:#8a94a6;letter-spacing:0.2px">Add-ons</div>
<div class="x" style="left:472.8px;width:120px;text-align:center;top:905.6px;font-size:12.4px;line-height:16px;color:#8a94a6;letter-spacing:0.2px">Sync</div>
<div class="x" style="left:564.4px;width:120px;text-align:center;top:905.6px;font-size:12.4px;line-height:16px;color:#8a94a6;letter-spacing:0.2px">Preferences</div>
<div class="x" style="left:761.6px;top:880.8px;font-size:14.8px;line-height:20px;color:#9aa2b0;letter-spacing:0.24px">Restore Previous Session</div>
</div>
</div>
<div class="cap" style="left:655px;top:467px;width:137px"><span style="letter-spacing:.7px">Iceweasel Start Page - Iceweasel</span></div>

<div class="abs" id="wspanel" style="left:865.5px;top:56.5px;width:140px;height:551px;background:rgba(2,8,9,.72);border:1px solid rgba(70,92,92,.36);border-radius:4px 0 0 4px"></div>
<div class="abs" id="ws1" style="left:871px;top:61px;width:126px;height:77.400px;overflow:hidden;background:radial-gradient(ellipse 45% 70% at 0% 0%, rgba(26,84,100,.75), rgba(26,84,100,0) 100%),radial-gradient(ellipse 40% 50% at 100% 100%, rgba(80,156,146,.55), rgba(80,156,146,0) 100%),linear-gradient(45deg, #1c5866 0%, #20626e 28%, #30797b 47%, #47938b 61%, #2b6e78 79%, #1a4f5e 100%)">
<svg class="abs" style="left:0;top:0" width="126" height="77.400" viewBox="871 61 126 77.400"><defs><linearGradient id="tbg" x1="0" y1="0" x2="1" y2="0"><stop offset="0" stop-color="#c8a050"/><stop offset=".25" stop-color="#8898b8"/><stop offset=".5" stop-color="#c88060"/><stop offset=".75" stop-color="#88a8c8"/><stop offset="1" stop-color="#d8c858"/></linearGradient></defs><rect x="887.900" y="61.300" width="61.100" height="77" fill="#cfcfcf"/><rect x="887.900" y="61.300" width="61.100" height="8.800" fill="#e9e9e9"/><rect x="889" y="63.600" width="26" height=".9" fill="#8a8a8a" opacity=".55"/><rect x="889.500" y="65.100" width="42" height="1.300" fill="url(#tbg)" opacity=".7"/><rect x="889.500" y="66.800" width="44" height="1.200" fill="#b8b4a8" opacity=".6"/><rect x="892.900" y="68.600" width="52" height="1" fill="#fff" opacity=".85"/><rect x="887.900" y="70.100" width="1.500" height="64" fill="#f0f0f0"/><rect x="892.900" y="71.400" width="51.400" height="63" fill="#fff"/><rect x="887.900" y="134.400" width="61.100" height="3.900" fill="#dedede"/><rect x="890.500" y="135" width="16" height="1.200" fill="#fff"/><rect x="907" y="135.200" width="22" height=".8" fill="#999" opacity=".6"/><rect x="889" y="136.900" width="30" height=".7" fill="#888" opacity=".5"/><rect x="871.600" y="87.600" width="59.800" height="29.700" fill="#000" opacity=".25"/><rect x="871.800" y="87.800" width="59.400" height="29.300" fill="#fff"/><rect x="871.800" y="87.800" width="59.400" height="3.200" fill="#e8e8e8"/><rect x="876" y="88.800" width="9" height="1.300" fill="#bbb" opacity=".7"/><rect x="917" y="88.800" width="11" height="1.300" fill="#bbb" opacity=".6"/><rect x="871.800" y="91" width="11.200" height="26.100" fill="#f6f6f6"/><rect x="883" y="91" width=".9" height="26.100" fill="#e6e6e6"/><rect x="871.800" y="93.200" width="11.200" height="2.300" fill="#4a90d9"/><rect x="883.900" y="92.300" width="47.300" height="2.200" fill="#4a90d9"/><rect x="884.800" y="92.60" width="1.900" height="1.600" fill="#c9a96e"/><rect x="887.4" y="93.00" width="5" height=".8" fill="#fff" opacity=".7"/><rect x="907.6" y="93.00" width="3.4" height=".8" fill="#fff" opacity=".7"/><rect x="911.6" y="93.00" width="5.6" height=".8" fill="#fff" opacity=".7"/><rect x="919" y="93.00" width="1.6" height=".8" fill="#fff" opacity=".7"/><rect x="924.4" y="93.00" width="5" height=".8" fill="#fff" opacity=".7"/><rect x="884.800" y="94.86" width="1.900" height="1.600" fill="#c9a96e"/><rect x="887.4" y="95.26" width="6" height=".8" fill="#555" opacity="0.55"/><rect x="907.6" y="95.26" width="3.4" height=".8" fill="#777" opacity="0.45"/><rect x="911.6" y="95.26" width="5.6" height=".8" fill="#777" opacity="0.45"/><rect x="919" y="95.26" width="1.6" height=".8" fill="#777" opacity="0.45"/><rect x="924.4" y="95.26" width="5" height=".8" fill="#777" opacity="0.45"/><rect x="884.800" y="97.12" width="1.900" height="1.600" fill="#c9a96e"/><rect x="887.4" y="97.52" width="7" height=".8" fill="#555" opacity="0.55"/><rect x="907.6" y="97.52" width="3.4" height=".8" fill="#777" opacity="0.45"/><rect x="911.6" y="97.52" width="5.6" height=".8" fill="#777" opacity="0.45"/><rect x="919" y="97.52" width="1.6" height=".8" fill="#777" opacity="0.45"/><rect x="924.4" y="97.52" width="5" height=".8" fill="#777" opacity="0.45"/><rect x="884.800" y="99.38" width="1.900" height="1.600" fill="#c9a96e"/><rect x="887.4" y="99.78" width="8" height=".8" fill="#555" opacity="0.55"/><rect x="907.6" y="99.78" width="3.4" height=".8" fill="#777" opacity="0.45"/><rect x="911.6" y="99.78" width="3" height=".8" fill="#777" opacity="0.45"/><rect x="919" y="99.78" width="1.6" height=".8" fill="#777" opacity="0.45"/><rect x="924.4" y="99.78" width="5" height=".8" fill="#777" opacity="0.45"/><rect x="884.800" y="101.64" width="1.900" height="1.600" fill="#c9a96e"/><rect x="887.4" y="102.04" width="5" height=".8" fill="#555" opacity="0.55"/><rect x="907.6" y="102.04" width="3.4" height=".8" fill="#777" opacity="0.45"/><rect x="911.6" y="102.04" width="5.6" height=".8" fill="#777" opacity="0.45"/><rect x="919" y="102.04" width="1.6" height=".8" fill="#777" opacity="0.45"/><rect x="924.4" y="102.04" width="5" height=".8" fill="#777" opacity="0.45"/><rect x="884.800" y="103.90" width="1.900" height="1.600" fill="#c9a96e"/><rect x="887.4" y="104.30" width="6" height=".8" fill="#555" opacity="0.55"/><rect x="907.6" y="104.30" width="3.4" height=".8" fill="#777" opacity="0.45"/><rect x="911.6" y="104.30" width="5.6" height=".8" fill="#777" opacity="0.45"/><rect x="919" y="104.30" width="1.6" height=".8" fill="#777" opacity="0.45"/><rect x="924.4" y="104.30" width="5" height=".8" fill="#777" opacity="0.45"/><rect x="884.800" y="106.16" width="1.900" height="1.600" fill="#c9a96e"/><rect x="887.4" y="106.56" width="7" height=".8" fill="#555" opacity="0.55"/><rect x="907.6" y="106.56" width="3.4" height=".8" fill="#777" opacity="0.45"/><rect x="911.6" y="106.56" width="3" height=".8" fill="#777" opacity="0.45"/><rect x="919" y="106.56" width="1.6" height=".8" fill="#777" opacity="0.45"/><rect x="924.4" y="106.56" width="5" height=".8" fill="#777" opacity="0.45"/><rect x="884.800" y="108.42" width="1.900" height="1.600" fill="#c9a96e"/><rect x="887.4" y="108.82" width="8" height=".8" fill="#555" opacity="0.55"/><rect x="907.6" y="108.82" width="3.4" height=".8" fill="#777" opacity="0.45"/><rect x="911.6" y="108.82" width="5.6" height=".8" fill="#777" opacity="0.45"/><rect x="919" y="108.82" width="1.6" height=".8" fill="#777" opacity="0.45"/><rect x="924.4" y="108.82" width="5" height=".8" fill="#777" opacity="0.45"/><rect x="884.800" y="110.68" width="1.900" height="1.600" fill="#c9a96e"/><rect x="887.4" y="111.08" width="5" height=".8" fill="#555" opacity="0.55"/><rect x="907.6" y="111.08" width="3.4" height=".8" fill="#777" opacity="0.45"/><rect x="911.6" y="111.08" width="5.6" height=".8" fill="#777" opacity="0.45"/><rect x="919" y="111.08" width="1.6" height=".8" fill="#777" opacity="0.45"/><rect x="924.4" y="111.08" width="5" height=".8" fill="#777" opacity="0.45"/><rect x="884.800" y="112.94" width="1.900" height="1.600" fill="#c9a96e"/><rect x="887.4" y="113.34" width="6" height=".8" fill="#555" opacity="0.55"/><rect x="907.6" y="113.34" width="3.4" height=".8" fill="#777" opacity="0.45"/><rect x="911.6" y="113.34" width="3" height=".8" fill="#777" opacity="0.45"/><rect x="919" y="113.34" width="1.6" height=".8" fill="#777" opacity="0.45"/><rect x="924.4" y="113.34" width="5" height=".8" fill="#777" opacity="0.45"/><rect x="874.300" y="91.90" width="5.5" height=".7" fill="#999" opacity=".4"/><rect x="874.300" y="96.14" width="5.5" height=".7" fill="#999" opacity=".4"/><rect x="874.300" y="98.26" width="5.5" height=".7" fill="#999" opacity=".4"/><rect x="874.300" y="100.38" width="5.5" height=".7" fill="#999" opacity=".4"/><rect x="874.300" y="102.50" width="5.5" height=".7" fill="#999" opacity=".4"/><rect x="874.300" y="104.62" width="5.5" height=".7" fill="#999" opacity=".4"/><rect x="874.300" y="106.74" width="5.5" height=".7" fill="#999" opacity=".4"/><rect x="874.300" y="108.86" width="7" height=".7" fill="#999" opacity=".4"/><rect x="874.300" y="110.98" width="7" height=".7" fill="#999" opacity=".4"/><rect x="874.300" y="113.10" width="7" height=".7" fill="#999" opacity=".4"/><rect x="874.300" y="115.22" width="7" height=".7" fill="#999" opacity=".4"/><rect x="911" y="114.400" width="19.600" height="1.700" fill="#f4f4f4" stroke="#d8d8d8" stroke-width=".3"/><rect x="931.200" y="69.200" width="65.400" height="63.200" fill="#000" opacity=".25"/><rect x="931.400" y="69.400" width="65" height="62.800" fill="#f2f2f2"/><rect x="931.400" y="69.400" width="65" height="7.300" fill="#eeeeee"/><rect x="952" y="70.300" width="18" height=".8" fill="#999" opacity=".5"/><rect x="932.400" y="71.900" width="13.500" height="1.800" fill="#f6f6f6" stroke="#d0d0d0" stroke-width=".25"/><rect x="933.400" y="74.400" width="32.500" height="1.500" fill="#fff" stroke="#d4d4d4" stroke-width=".25"/><rect x="966.400" y="74.400" width="11" height="1.500" fill="#fff" stroke="#d4d4d4" stroke-width=".25"/><rect x="979.4" y="74.700" width="1" height="1" fill="#555" opacity=".7"/><rect x="981.6" y="74.700" width="1" height="1" fill="#555" opacity=".7"/><rect x="984" y="74.700" width="1" height="1" fill="#555" opacity=".7"/><rect x="986.4" y="74.700" width="1" height="1" fill="#555" opacity=".7"/><circle cx="991.300" cy="75.200" r=".7" fill="#d84040"/><rect x="993.800" y="74.600" width="1.200" height="1.200" fill="#555" opacity=".7"/><rect x="990.600" y="77.600" width="4.800" height="1" fill="#ccc" opacity=".8"/><use href="#icew" transform="translate(963.700 97.200) scale(.385) translate(-24.200 -198.600)"/><circle cx="949.800" cy="105.900" r=".6" fill="none" stroke="#555" stroke-width=".35"/><rect x="951.600" y="104.900" width="22.400" height="2" fill="#fff" stroke="#ddd" stroke-width=".25"/><rect x="975" y="105.500" width="3.400" height=".8" fill="#888" opacity=".6"/><rect x="950.900" y="108.300" width="2" height="2.700" rx=".3" fill="#2f8fd8"/><rect x="953.800" y="108.800" width="22.600" height=".6" fill="#888" opacity=".55"/><rect x="953.800" y="109.700" width="11.600" height=".6" fill="#888" opacity=".55"/><rect x="965.600" y="109.700" width="6" height=".6" fill="#3a50e0" opacity=".7"/><rect x="931.400" y="124.500" width="65" height="7.700" fill="#e9e9eb"/><rect x="935.7" y="127.300" width="1.600" height="1.700" rx=".4" fill="#7d8a9e" opacity=".9"/><rect x="934.9" y="129.700" width="3.200" height=".5" fill="#8a94a6" opacity=".6"/><rect x="941.8000000000001" y="127.300" width="1.600" height="1.700" rx=".4" fill="#7d8a9e" opacity=".9"/><rect x="941.0" y="129.700" width="3.200" height=".5" fill="#8a94a6" opacity=".6"/><rect x="947.8000000000001" y="127.300" width="1.600" height="1.700" rx=".4" fill="#7d8a9e" opacity=".9"/><rect x="947.0" y="129.700" width="3.200" height=".5" fill="#8a94a6" opacity=".6"/><rect x="953.9000000000001" y="127.300" width="1.600" height="1.700" rx=".4" fill="#7d8a9e" opacity=".9"/><rect x="953.1" y="129.700" width="3.200" height=".5" fill="#8a94a6" opacity=".6"/><rect x="959.9000000000001" y="127.300" width="1.600" height="1.700" rx=".4" fill="#7d8a9e" opacity=".9"/><rect x="959.1" y="129.700" width="3.200" height=".5" fill="#8a94a6" opacity=".6"/><rect x="966.0" y="127.300" width="1.600" height="1.700" rx=".4" fill="#7d8a9e" opacity=".9"/><rect x="965.1999999999999" y="129.700" width="3.200" height=".5" fill="#8a94a6" opacity=".6"/><rect x="972.0" y="127.300" width="1.600" height="1.700" rx=".4" fill="#7d8a9e" opacity=".9"/><rect x="971.1999999999999" y="129.700" width="3.200" height=".5" fill="#8a94a6" opacity=".6"/><circle cx="979.800" cy="128.500" r="1.200" fill="none" stroke="#8c97a8" stroke-width=".6"/><rect x="982" y="128.200" width="11.400" height=".6" fill="#9aa2b0" opacity=".7"/></svg>
</div>
<div class="abs" style="left:868.7px;top:58.7px;width:130.6px;height:82px;border:2.3px solid #cfcfcf;border-radius:3px;box-shadow:0 0 2px rgba(0,0,0,.8),inset 0 0 1px rgba(0,0,0,.6)"></div>
<div class="abs" id="ws2" style="left:871.1px;top:143.7px;width:125.3px;height:76.1px;overflow:hidden;background:radial-gradient(ellipse 45% 70% at 0% 0%, rgba(26,84,100,.75), rgba(26,84,100,0) 100%),radial-gradient(ellipse 40% 50% at 100% 100%, rgba(80,156,146,.55), rgba(80,156,146,0) 100%),linear-gradient(45deg, #1c5866 0%, #20626e 28%, #30797b 47%, #47938b 61%, #2b6e78 79%, #1a4f5e 100%)">
<svg class="abs" style="left:59px;top:28px" width="16" height="24" viewBox="0 0 16 24"><path d="M11.800 6.600A4.300 4.300 0 1 0 8.800 11.200M9.600 4.600A2.300 2.300 0 1 0 10.800 8" fill="none" stroke="#dfeeee" stroke-width=".8" opacity=".8" stroke-linecap="round"/><path d="M6.400 11.400Q9 16 11.600 18.600" fill="none" stroke="#cfe4e4" stroke-width=".5" opacity=".3"/></svg>
</div>
</div>
</body>
</html>
